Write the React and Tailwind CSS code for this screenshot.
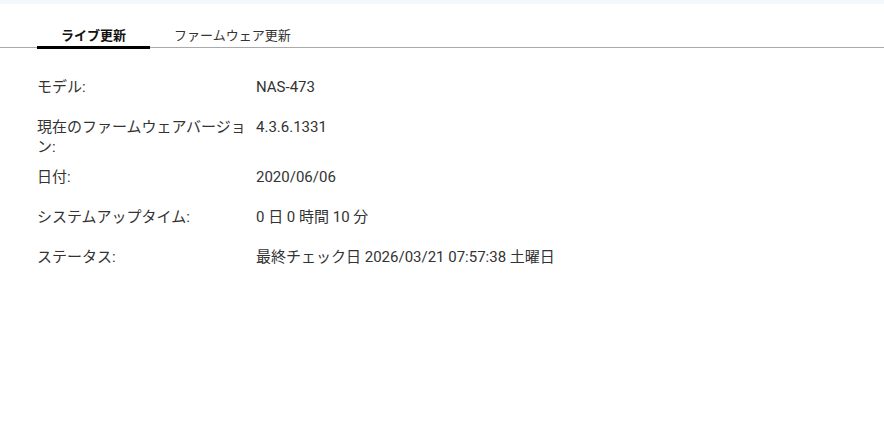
export default function App() {
  const rows = [
    ["モデル:", "NAS-473"],
    ["現在のファームウェアバージョン:", "4.3.6.1331"],
    ["日付:", "2020/06/06"],
    ["システムアップタイム:", "0 日 0 時間 10 分"],
    ["ステータス:", "最終チェック日 2026/03/21 07:57:38 土曜日"],
  ];
  return (
    <div
      className="w-[884px] h-[434px] bg-white overflow-hidden text-[#333]"
      style={{ fontFamily: 'Roboto, "Noto Sans CJK JP", sans-serif' }}
    >
      <div className="h-[4px] bg-[#f3f8fd]" />
      <div className="flex pl-[37px] border-b border-[#aaaaaa]">
        <div className="relative px-6 pt-[22px] pb-[1px] text-[13px] leading-[20px] font-bold text-[#111]">
          ライブ更新
          <div className="absolute left-0 right-0 bottom-[-2px] h-[3px] bg-black" />
        </div>
        <div className="px-6 pt-[22px] pb-[1px] text-[13px] leading-[20px] text-[#333]">
          ファームウェア更新
        </div>
      </div>
      <div className="pl-[37px] pt-[29px] flex flex-col gap-[10px] text-[15px] leading-[20px]">
        {rows.map(([k, v]) => (
          <div key={k} className="flex min-h-[30px]">
            <div className="w-[219px] shrink-0">{k}</div>
            <div>{v}</div>
          </div>
        ))}
      </div>
    </div>
  );
}
